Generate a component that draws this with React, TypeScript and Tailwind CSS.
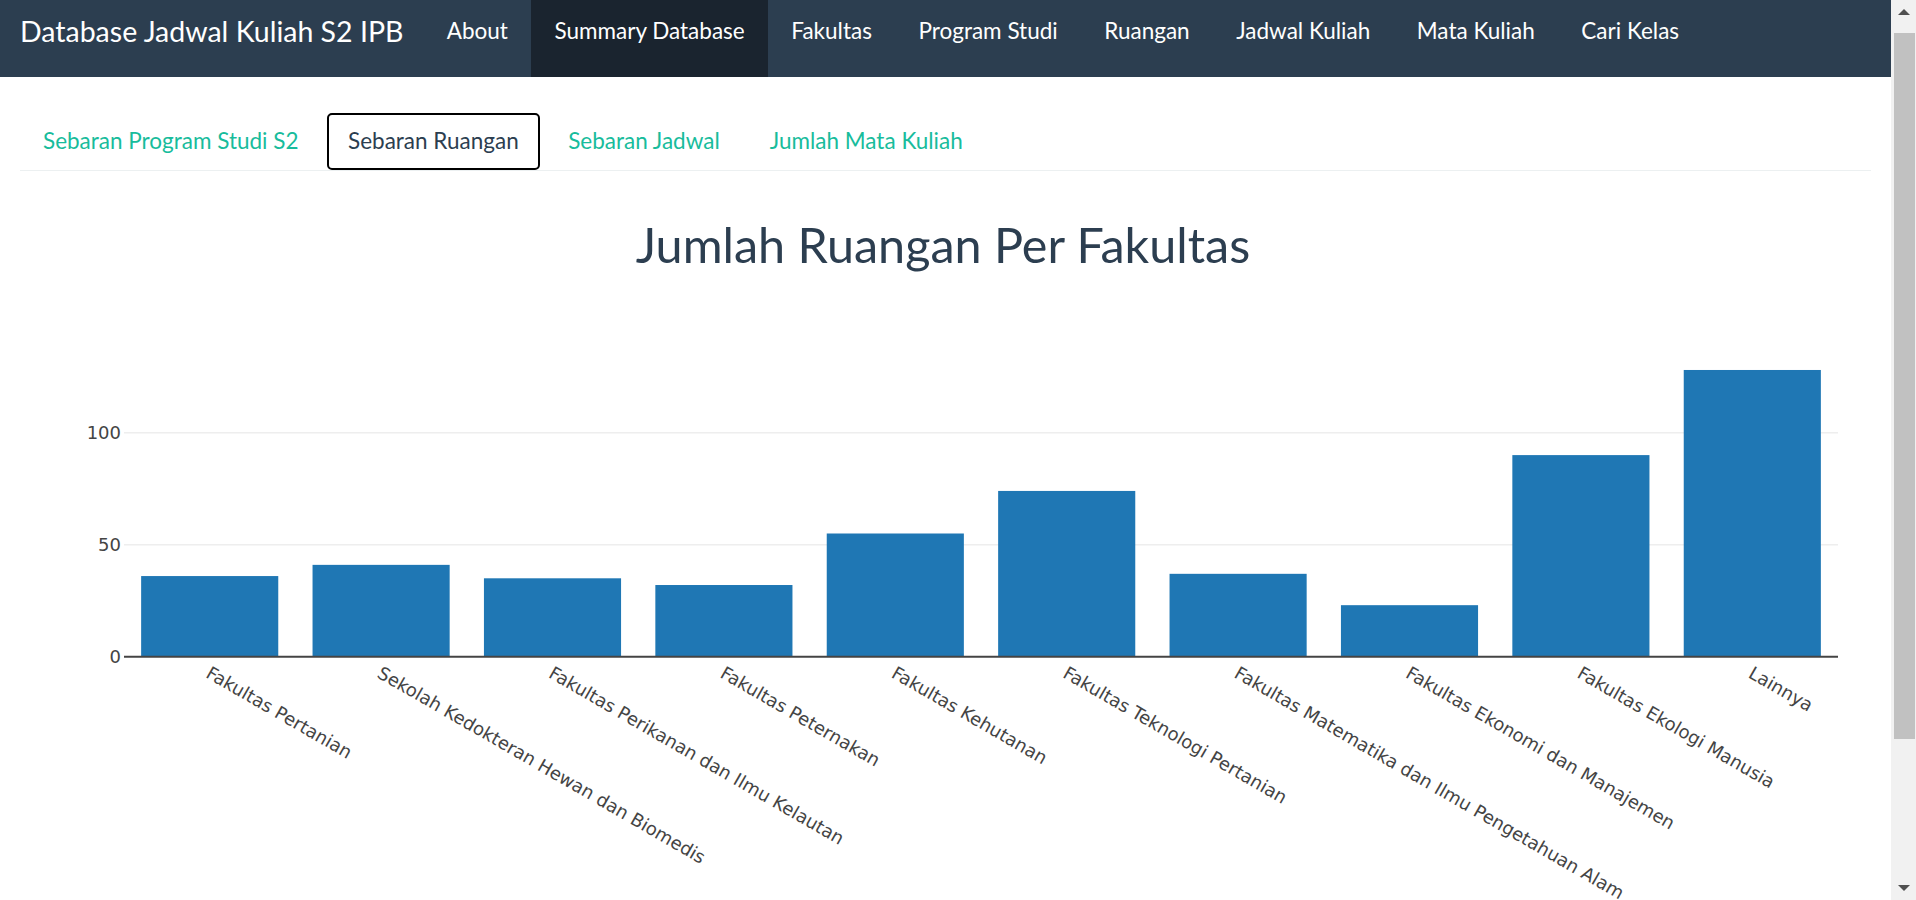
import React from "react";

const navItems = [
  "About",
  "Summary Database",
  "Fakultas",
  "Program Studi",
  "Ruangan",
  "Jadwal Kuliah",
  "Mata Kuliah",
  "Cari Kelas",
];

const tabs = ["Sebaran Program Studi S2", "Sebaran Ruangan", "Sebaran Jadwal", "Jumlah Mata Kuliah"];

const data: [string, number][] = [
  ["Fakultas Pertanian", 36],
  ["Sekolah Kedokteran Hewan dan Biomedis", 41],
  ["Fakultas Perikanan dan Ilmu Kelautan", 35],
  ["Fakultas Peternakan", 32],
  ["Fakultas Kehutanan", 55],
  ["Fakultas Teknologi Pertanian", 74],
  ["Fakultas Matematika dan Ilmu Pengetahuan Alam", 37],
  ["Fakultas Ekonomi dan Manajemen", 23],
  ["Fakultas Ekologi Manusia", 90],
  ["Lainnya", 128],
];

const W = 1851;
const H = 729;
const X0 = 104;
const X1 = 1818;
const Y0 = 485.7;
const PPU = 2.24;

function Chart() {
  const step = (X1 - X0) / data.length;
  const bw = step * 0.8;
  const tickFont = "DejaVu Sans, Verdana, sans-serif";
  return (
    <svg width={W} height={H} viewBox={`0 0 ${W} ${H}`} className="block">
      <text
        x={923}
        y={92.4}
        textAnchor="middle"
        fill="#2c3e50"
        style={{ fontFamily: "Lato, sans-serif", fontSize: 48.5 }}
      >
        Jumlah Ruangan Per Fakultas
      </text>
      {[50, 100].map((v) => (
        <line key={v} x1={X0} x2={X1} y1={Y0 - v * PPU} y2={Y0 - v * PPU} stroke="#eeeeee" strokeWidth={1.5} />
      ))}
      {[0, 50, 100].map((v) => (
        <text
          key={v}
          x={101}
          y={Y0 - v * PPU + 6.5}
          textAnchor="end"
          fill="#444"
          style={{ fontFamily: tickFont, fontSize: 18 }}
        >
          {v}
        </text>
      ))}
      {data.map(([name, v], i) => {
        const x = X0 + step * i + (step - bw) / 2;
        const h = v * PPU;
        return <rect key={name} x={x} y={Y0 - h} width={bw} height={h} fill="#1f77b4" />;
      })}
      <line x1={X0} x2={X1} y1={Y0} y2={Y0} stroke="#444" strokeWidth={2} />
      {data.map(([name], i) => {
        const cx = X0 + step * (i + 0.5);
        const tx = cx - 5;
        const ty = Y0 + 20;
        return (
          <text
            key={name}
            x={tx}
            y={ty}
            transform={`rotate(30 ${tx} ${ty})`}
            fill="#444"
            style={{ fontFamily: tickFont, fontSize: 18 }}
          >
            {name}
          </text>
        );
      })}
    </svg>
  );
}

export default function App() {
  return (
    <div className="w-[1916px] h-[900px] overflow-hidden flex bg-white">
      <div className="flex-1 min-w-0 flex flex-col [font-family:Lato,sans-serif]">
        <nav className="h-[77px] shrink-0 bg-[#2c3e50] flex items-start text-white">
          <div className="pl-[20px] pr-[20px] pt-[12px] text-[28.5px] leading-[38px] whitespace-nowrap">
            Database Jadwal Kuliah S2 IPB
          </div>
          {navItems.map((n) => (
            <div
              key={n}
              className={
                "h-full px-[23.3px] pt-[15px] text-[22.5px] leading-[31px] whitespace-nowrap " +
                (n === "Summary Database" ? "bg-[#1a242f]" : "")
              }
            >
              {n}
            </div>
          ))}
        </nav>
        <div className="mx-[20px] mt-[36px] flex gap-[4px] border-b border-[#ecf0f1]">
          {tabs.map((t) => (
            <div
              key={t}
              className={
                "h-[57px] pb-[1px] flex items-center text-[22.5px] whitespace-nowrap border-2 rounded-[5px] " +
                (t === "Sebaran Ruangan"
                  ? "px-[19.5px] ml-[1px] mr-[1px] border-black text-[#2c3e50]"
                  : "px-[21px] border-transparent text-[#18bc9c]")
              }
            >
              {t}
            </div>
          ))}
        </div>
        <div className="mx-[20px]">
          <Chart />
        </div>
      </div>
      <div className="w-[25px] shrink-0 bg-[#f1f1f1] flex flex-col items-center">
        <div className="h-[33px] w-full flex items-center justify-center">
          <div className="w-0 h-0 border-l-[6px] border-r-[6px] border-b-[6px] border-l-transparent border-r-transparent border-b-[#505050] -mt-[9px]" />
        </div>
        <div className="ml-[2px] mr-0 w-[21px] h-[706px] bg-[#c1c1c1]" />
        <div className="flex-1 w-full flex items-end justify-center pb-[9px]">
          <div className="w-0 h-0 border-l-[6px] border-r-[6px] border-t-[6px] border-l-transparent border-r-transparent border-t-[#505050]" />
        </div>
      </div>
    </div>
  );
}
